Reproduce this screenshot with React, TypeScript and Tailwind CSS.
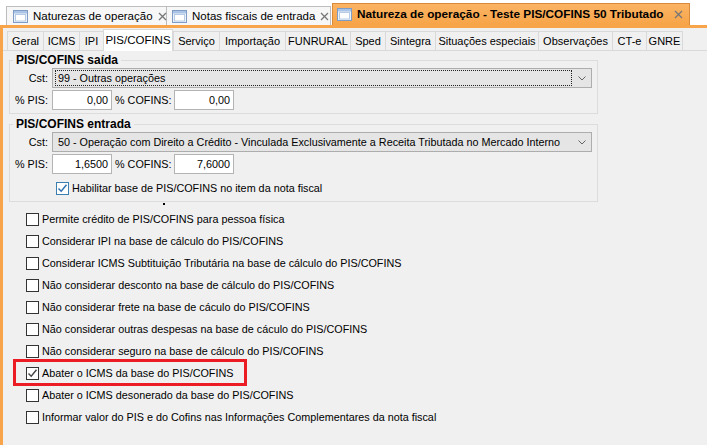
import React from "react";

const WinIcon = () => (
  <svg width="15" height="13" viewBox="0 0 15 13" className="shrink-0">
    <rect x="0.5" y="0.5" width="14" height="12" fill="#eaf2fb" stroke="#7f9dc4" />
    <rect x="1" y="1" width="13" height="2.5" fill="#a9c4e6" />
    <rect x="2.5" y="4.5" width="10" height="6.5" fill="#ffffff" stroke="#b6cbe6" />
  </svg>
);

const Close = () => (
  <svg width="9" height="9" viewBox="0 0 9 9" className="shrink-0">
    <path d="M1 1 L8 8 M8 1 L1 8" stroke="#777" strokeWidth="1.3" />
  </svg>
);

const Check = ({ checked }: { checked?: boolean }) => (
  <div className="w-[13px] h-[13px] border border-[#333] bg-white shrink-0 flex items-center justify-center">
    {checked && (
      <svg width="11" height="11" viewBox="0 0 11 11">
        <path d="M1.5 5.5 L4.2 8.3 L9.5 1.8" fill="none" stroke="#444" strokeWidth="1.4" />
      </svg>
    )}
  </div>
);

const CheckBlue = () => (
  <div className="w-[13px] h-[13px] border border-[#3c7fb1] bg-white shrink-0 flex items-center justify-center">
    <svg width="11" height="11" viewBox="0 0 11 11">
      <path d="M1.5 5.5 L4.2 8.3 L9.5 1.8" fill="none" stroke="#2a6fb0" strokeWidth="1.4" />
    </svg>
  </div>
);

const Select = ({ text, focus }: { text: string; focus?: boolean }) => (
  <div className="w-[540px] h-[20px] border border-[#adadad] bg-[#e5e5e5] flex items-center">
    <div
      className={`flex-1 h-[16px] ml-[2px] flex items-center pl-[2px] whitespace-nowrap ${
        focus ? "border border-dotted border-[#222]" : "border border-transparent"
      }`}
    >
      {text}
    </div>
    <div className="w-[19px] flex items-center justify-center">
      <svg width="8" height="5" viewBox="0 0 8 5">
        <path d="M0.5 0.5 L4 4 L7.5 0.5" fill="none" stroke="#666" strokeWidth="1" />
      </svg>
    </div>
  </div>
);

const Input = ({ v }: { v: string }) => (
  <div className="w-[60px] h-[20px] border border-[#b4b4b4] bg-white flex items-center justify-end pr-[3px]">
    {v}
  </div>
);

const NumRow = ({ pis, cofins }: { pis: string; cofins: string }) => (
  <div className="flex items-center h-[20px] whitespace-nowrap">
    <div className="w-[42px] pl-[5px]">% PIS:</div>
    <Input v={pis} />
    <div className="w-[62px] pl-[3px]">% COFINS:</div>
    <Input v={cofins} />
  </div>
);

const innerTabs: { t: string; w: string }[] = [
  { t: "Geral", w: "w-[36px]" },
  { t: "ICMS", w: "w-[36px]" },
  { t: "IPI", w: "w-[24px]" },
  { t: "PIS/COFINS", w: "w-[70px]" },
  { t: "Serviço", w: "w-[46px]" },
  { t: "Importação", w: "w-[66px]" },
  { t: "FUNRURAL", w: "w-[65px]" },
  { t: "Sped", w: "w-[35px]" },
  { t: "Sintegra", w: "w-[50px]" },
  { t: "Situações especiais", w: "w-[103px]" },
  { t: "Observações", w: "w-[74px]" },
  { t: "CT-e", w: "w-[34px]" },
  { t: "GNRE", w: "w-[37px]" },
];

const checks = [
  "Permite crédito de PIS/COFINS para pessoa física",
  "Considerar IPI na base de cálculo do PIS/COFINS",
  "Considerar ICMS Subtituição Tributária na base de cálculo do PIS/COFINS",
  "Não considerar desconto na base de cálculo do PIS/COFINS",
  "Não considerar frete na base de cáculo do PIS/COFINS",
  "Não considerar outras despesas na base de cáculo do PIS/COFINS",
  "Não considerar seguro na base de cálculo do PIS/COFINS",
  "Abater o ICMS da base do PIS/COFINS",
  "Abater o ICMS desonerado da base do PIS/COFINS",
  "Informar valor do PIS e do Cofins nas Informações Complementares da nota fiscal",
];

export default function App() {
  return (
    <div className="w-[707px] h-[445px] bg-white overflow-hidden flex flex-col font-['Tahoma','Liberation_Sans',sans-serif] text-[10.8px] text-black leading-[13px]">
      {/* top document tabs */}
      <div className="h-[25px] flex items-end pl-[6px] shrink-0 whitespace-nowrap">
        <div className="w-[161px] h-[19px] border border-b-0 border-[#bdbdbd] bg-[#f7f7f7] flex items-center pl-[6px] pr-[6px] gap-[5px]">
          <WinIcon />
          <span className="flex-1 text-[11.5px]">Naturezas de operação</span>
          <Close />
        </div>
        <div className="w-[164px] h-[19px] border border-b-0 border-l-0 border-[#bdbdbd] bg-[#f7f7f7] flex items-center pl-[5px] pr-[6px] gap-[5px]">
          <WinIcon />
          <span className="flex-1 text-[11.5px]">Notas fiscais de entrada</span>
          <Close />
        </div>
        <div className="ml-[1px] w-[358px] h-[22px] border border-b-0 border-[#d88a3a] bg-gradient-to-b from-[#fbb463] to-[#f7a448] flex items-center pl-[4px] pr-[6px] gap-[5px]">
          <WinIcon />
          <span className="flex-1 text-[11.8px] font-bold">Natureza de operação - Teste PIS/COFINS 50 Tributado</span>
          <Close />
        </div>
      </div>

      {/* orange frame */}
      <div className="flex-1 border-t-[3px] border-l-[3px] border-[#f7a44b] bg-[#f0f0f0] flex flex-col">
        {/* inner tabs */}
        <div className="h-[22px] flex items-end pl-[4px] shrink-0 whitespace-nowrap">
          {innerTabs.map(({ t, w }) =>
            t === "PIS/COFINS" ? (
              <div
                key={t}
                className={`${w} h-[22px] -mb-px relative z-10 bg-white border border-b-0 border-[#d9d9d9] flex items-center justify-center text-[11.5px]`}
              >
                {t}
              </div>
            ) : (
              <div
                key={t}
                className={`${w} h-[19px] bg-[#f0f0f0] border border-r-0 last:border-r border-b-0 border-[#d9d9d9] flex items-center justify-center text-[11px]`}
              >
                {t}
              </div>
            )
          )}
        </div>

        {/* panel */}
        <div className="flex-1 border-t border-[#d9d9d9] bg-[#f0f0f0] flex flex-col pl-[6px] pt-[2px]">
          <fieldset className="w-[589px] border border-[#dcdcdc] pl-[0px] pb-[3px]">
            <legend className="ml-[3px] px-[3px] font-bold text-[12px] leading-[14px]">PIS/COFINS saída</legend>
            <div className="flex flex-col gap-[2px] mt-[1px]">
              <div className="flex items-center h-[20px]">
                <div className="w-[42px] text-right pr-[4px]">Cst:</div>
                <Select text="99 - Outras operações" focus />
              </div>
              <NumRow pis="0,00" cofins="0,00" />
            </div>
          </fieldset>

          <fieldset className="w-[589px] border border-[#dcdcdc] mt-[3px] pb-[5px]">
            <legend className="ml-[3px] px-[3px] font-bold text-[12px] leading-[14px]">PIS/COFINS entrada</legend>
            <div className="flex flex-col gap-[2px] mt-[1px]">
              <div className="flex items-center h-[20px]">
                <div className="w-[42px] text-right pr-[4px]">Cst:</div>
                <Select text="50 - Operação com  Direito a Crédito - Vinculada Exclusivamente a Receita Tributada no Mercado Interno" />
              </div>
              <NumRow pis="1,6500" cofins="7,6000" />
              <div className="flex items-center gap-[3px] pl-[46px] h-[16px] mt-[4px]">
                <CheckBlue />
                <span>Habilitar base de PIS/COFINS no item da nota fiscal</span>
              </div>
            </div>
          </fieldset>

          <div className="ml-[154px] mt-[1px] w-[2px] h-[2px] bg-black" />

          <div className="flex flex-col pl-[17px] mt-[3px] whitespace-nowrap">
            {checks.map((c, i) => (
              <div key={c} className="relative h-[22px] flex items-center gap-[3px]">
                {i === 7 && (
                  <div className="absolute left-[-13px] top-[-3px] w-[234px] h-[27px] border-[3px] border-[#ec1c24]" />
                )}
                <Check checked={i === 7} />
                <span>{c}</span>
              </div>
            ))}
          </div>
        </div>
      </div>
    </div>
  );
}
